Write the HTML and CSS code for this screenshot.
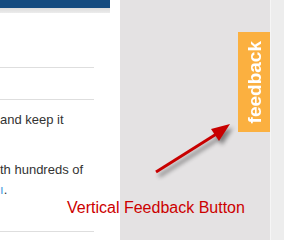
FILE: index.html
```html
<!DOCTYPE html>
<html>
<head>
<meta charset="utf-8">
<link rel="stylesheet" href="styles.css">
</head>
<body>
<div class="page">
  <div class="content">
    <div class="topbar"></div>
    <div class="topshadow"></div>
    <div class="rule first"></div>
    <div class="rule second"></div>
    <p class="text p1">and keep it</p>
    <p class="text p2">th hundreds of<br><a class="link">ı</a>.</p>
    <div class="rule third"></div>
  </div>
  <div class="panel">
    <div class="feedback"><span class="feedback-label">feedback</span></div>
  </div>
  <div class="strip"></div>
</div>
<div class="note">Vertical Feedback Button</div>
<svg class="arrow" width="284" height="240" viewBox="0 0 284 240">
  <g class="arrow-shape">
    <line x1="156" y1="172" x2="218" y2="133" stroke="#c80000" stroke-width="3"/>
    <polygon points="230,124 211,129 219,141" fill="#c80000"/>
  </g>
</svg>
</body>
</html>
```
FILE: styles.css
```css
html, body {
  margin: 0;
  padding: 0;
}
body {
  width: 284px;
  height: 240px;
  overflow: hidden;
  position: relative;
  font-family: "Liberation Sans", Arial, sans-serif;
}
.page {
  display: flex;
  height: 240px;
}
.content {
  width: 120px;
  background: #ffffff;
  overflow: hidden;
}
.topbar {
  width: 110px;
  height: 8px;
  background: #144b80;
}
.topshadow {
  width: 110px;
  height: 5px;
  background: linear-gradient(#dcdcdc, #ececec);
}
.rule {
  width: 94px;
  height: 1px;
  background: #dedede;
}
.rule.first { margin-top: 54px; }
.rule.second { margin-top: 31px; }
.rule.third { margin-top: 31px; }
.text {
  margin: 0;
  font-size: 13px;
  line-height: 20px;
  color: #333333;
  white-space: nowrap;
}
.p1 { margin-top: 10px; }
.p2 { margin-top: 30px; }
.link {
  color: #4a9ae0;
}
.panel {
  width: 150px;
  background: #e4e2e3;
  display: flex;
  flex-direction: column;
  align-items: flex-end;
  padding-top: 32px;
  box-sizing: border-box;
}
.feedback {
  width: 32px;
  height: 100px;
  background: #fbb040;
  display: flex;
  align-items: center;
  justify-content: center;
}
.feedback-label {
  writing-mode: vertical-rl;
  transform: rotate(180deg);
  color: #ffffff;
  font-weight: bold;
  font-size: 19px;
  line-height: 19px;
}
.strip {
  flex: 1;
  background: #ededed;
  border-left: 1px solid #f6f6f6;
}
.note {
  position: absolute;
  left: 67px;
  top: 200px;
  font-size: 16px;
  line-height: 16px;
  color: #cc0000;
  white-space: nowrap;
}
.arrow {
  position: absolute;
  left: 0;
  top: 0;
}
.arrow-shape {
  filter: drop-shadow(3px 4px 2px rgba(0, 0, 0, 0.45));
}
```
